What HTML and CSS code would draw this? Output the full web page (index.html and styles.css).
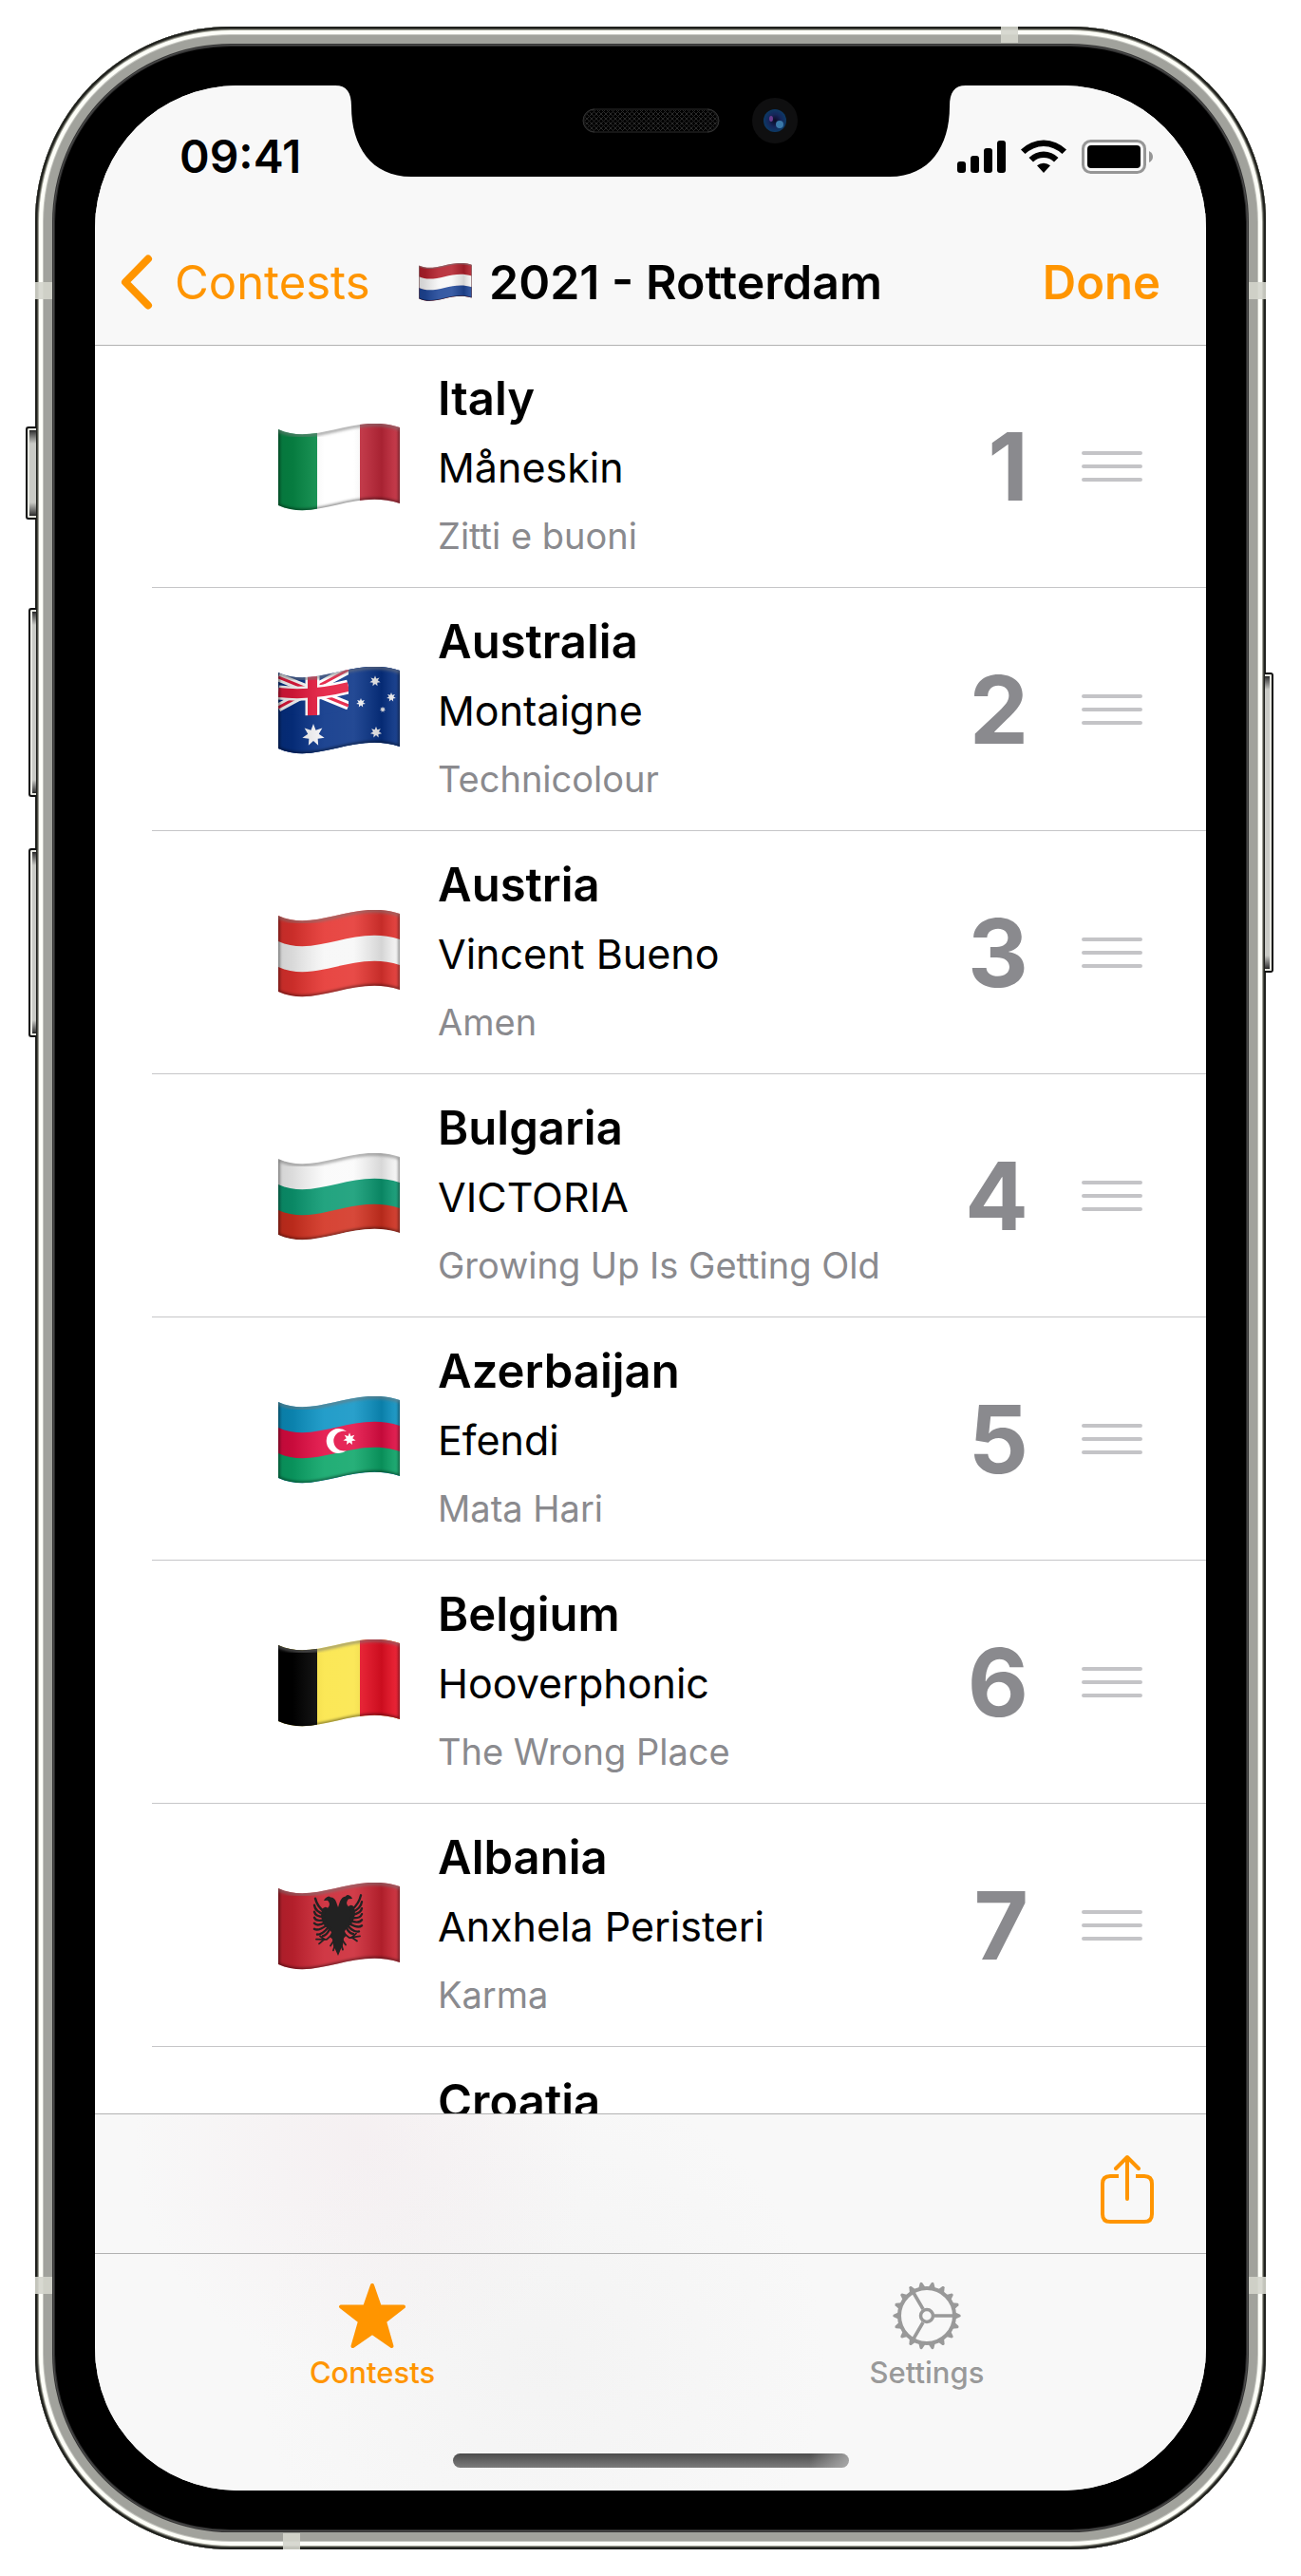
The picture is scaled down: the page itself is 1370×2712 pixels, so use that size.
FILE: index.html
```html
<!DOCTYPE html>
<html lang="en">
<head>
<meta charset="utf-8">
<meta name="viewport" content="width=device-width, initial-scale=1">
<title>2021 - Rotterdam</title>
<link rel="stylesheet" href="styles.css">
</head>
<body>
<svg class="defs" aria-hidden="true">
  <defs>
    <linearGradient id="shade">
      <stop offset="0" stop-color="#000" stop-opacity=".16"/>
      <stop offset=".12" stop-color="#000" stop-opacity=".12"/>
      <stop offset=".38" stop-color="#fff" stop-opacity=".1"/>
      <stop offset=".62" stop-color="#fff" stop-opacity=".12"/>
      <stop offset=".85" stop-color="#000" stop-opacity=".14"/>
      <stop offset="1" stop-color="#fff" stop-opacity=".1"/>
    </linearGradient>
    <filter id="soft"><feGaussianBlur stdDeviation="1.6"/></filter>
    <clipPath id="wave"><path d="M0 6C40 24 80-12 128 4V84C80 68 40 104 0 86Z"/></clipPath>
    <path id="band" d="M0 6C40 24 80-12 128 4V31C80 15 40 51 0 33Z"/>
    <g id="gloss">
      <path d="M0 6C40 24 80-12 128 4V84C80 68 40 104 0 86Z" fill="url(#shade)"/>
      <path d="M0 6V86C40 104 80 68 128 84V4" fill="none" stroke="#000" stroke-opacity=".5" stroke-width="3" filter="url(#soft)"/>
      <path d="M0 7C40 25 80-11 128 5" fill="none" stroke="#777" stroke-opacity=".6" stroke-width="4" filter="url(#soft)"/>
    </g>
    <polygon id="star7" points="0,-10 2.1,-4.4 7.8,-6.2 4.8,-1.1 9.7,2.2 3.9,3.1 4.3,9 0,5 -4.3,9 -3.9,3.1 -9.7,2.2 -4.8,-1.1 -7.8,-6.2 -2.1,-4.4"/>
    <g id="eagle-half">
      <path d="M0 26L2 20Q4 15 8 15Q10 12 14 16L15 18L11 18Q7 22 11 26Q14 23 17 27L18 34Q16 46 9 48L7 52L9 56L6 59L5 66L3 70L0 77Z"/>
      <g fill="none" stroke="#222" stroke-width="2.4" stroke-linecap="round">
        <path d="M14 30Q22 24 24 15M15 32Q24 29 25 22M15 35Q24 34 25 29M14 38Q23 40 25 35M13 41Q22 45 25 41M12 44Q21 50 25 47M10 46Q17 54 22 53M8 47Q12 55 16 55"/>
        <path stroke-width="1.8" d="M6 54L12 59L23 58M14 59L19 55M15 59L20 63M4 60L8 66M3 64L5 71"/>
      </g>
    </g>
    <symbol id="flag-it" viewBox="0 0 128 92"><g clip-path="url(#wave)">
      <rect width="128" height="92" fill="#fff"/><rect width="41" height="92" fill="#078c48"/><rect x="86" width="42" height="92" fill="#c3283a"/><use href="#gloss"/></g></symbol>
    <symbol id="flag-au" viewBox="0 0 128 92"><g clip-path="url(#wave)">
      <rect width="128" height="92" fill="#063186"/>
      <g transform="translate(0 1)">
        <path d="M0 10L74 40M74 2L0 42" stroke="#fff" stroke-width="9"/>
        <path d="M0 10L74 40M74 2L0 42" stroke="#e4183c" stroke-width="3"/>
        <path d="M36 0V52" stroke="#fff" stroke-width="15"/>
        <path d="M0 26Q34 30 74 20" fill="none" stroke="#fff" stroke-width="15"/>
        <path d="M36 0V52" stroke="#e4183c" stroke-width="10"/>
        <path d="M0 26Q34 30 74 20" fill="none" stroke="#e4183c" stroke-width="10"/>
      </g>
      <path d="M74 0H128V92H0V48Q34 56 74 45Z" fill="#063186"/>
      <g fill="#f4f4f6">
        <use href="#star7" transform="translate(37 72) scale(1.2)"/>
        <use href="#star7" transform="translate(102 15) scale(.58)"/>
        <use href="#star7" transform="translate(87 38) scale(.5)"/>
        <use href="#star7" transform="translate(119 32) scale(.5)"/>
        <use href="#star7" transform="translate(103 69) scale(.62)"/>
        <use href="#star7" transform="translate(110 45) scale(.32)"/>
      </g><use href="#gloss"/></g></symbol>
    <symbol id="flag-at" viewBox="0 0 128 92"><g clip-path="url(#wave)">
      <rect width="128" height="92" fill="#e5332f"/><use href="#band" y="27" fill="#f7f7f7"/><use href="#gloss"/></g></symbol>
    <symbol id="flag-bg" viewBox="0 0 128 92"><g clip-path="url(#wave)">
      <rect width="128" height="92" fill="#fafafa"/><use href="#band" y="53" fill="#d2301f"/><use href="#band" y="27" fill="#0b9a72"/><use href="#gloss"/></g></symbol>
    <symbol id="flag-az" viewBox="0 0 128 92"><g clip-path="url(#wave)">
      <rect width="128" height="92" fill="#0c93c4"/><use href="#band" y="53" fill="#0aa567"/><use href="#band" y="27" fill="#e30c43"/>
      <path d="M72 37A13 13 0 1 0 72 57A10.500 10.500 0 1 1 72 37Z" fill="#fff"/>
      <use href="#star7" transform="translate(75 45) scale(.68)" fill="#fff"/><use href="#gloss"/></g></symbol>
    <symbol id="flag-be" viewBox="0 0 128 92"><g clip-path="url(#wave)">
      <rect width="128" height="92" fill="#fbe544"/><rect width="41" height="92" fill="#000"/><rect x="86" width="42" height="92" fill="#ec0f23"/><use href="#gloss"/></g></symbol>
    <symbol id="flag-al" viewBox="0 0 128 92"><g clip-path="url(#wave)">
      <rect width="128" height="92" fill="#cb2331"/><use href="#gloss"/></g>
      <g transform="translate(63 0) skewY(-4)" fill="#222"><use href="#eagle-half"/><use href="#eagle-half" transform="scale(-1 1)"/></g></symbol>
    <symbol id="flag-nl" viewBox="0 0 128 92"><g clip-path="url(#wave)">
      <rect width="128" height="92" fill="#b3202c"/><use href="#band" y="53" fill="#1f4799"/><use href="#band" y="27" fill="#f7f7f7"/><use href="#gloss"/></g></symbol>
    <symbol id="grip" viewBox="0 0 64 34"><path d="M2 3H62M2 17H62M2 31H62" stroke="#c4c4c7" stroke-width="4" stroke-linecap="round"/></symbol>
    <pattern id="mesh" width="5" height="5" patternUnits="userSpaceOnUse"><path d="M0 0L5 5M5 0L0 5" stroke="#2a2a2a" stroke-width="1"/></pattern>
    <radialGradient id="lens">
      <stop offset="0" stop-color="#0a0a24"/><stop offset=".55" stop-color="#15265a"/><stop offset="1" stop-color="#0c3a66"/>
    </radialGradient>
  </defs>
</svg>

<main class="device">
  <span class="key key-mute"></span>
  <span class="key key-up"></span>
  <span class="key key-down"></span>
  <span class="key key-power"></span>
  <span class="band band-top"></span>
  <span class="band band-bottom"></span>
  <span class="band band-side band-left-high"></span>
  <span class="band band-side band-right-high"></span>
  <span class="band band-side band-left-low"></span>
  <span class="band band-side band-right-low"></span>

  <div class="screen">
    <svg class="notch" viewBox="0 0 664 96" aria-hidden="true">
      <path d="M0 0C12 0 17 7 17 22C17 64 38 96 80 96H584C626 96 647 64 647 22C647 7 652 0 664 0Z" fill="#000"/>
      <rect x="262" y="25" width="141" height="24" rx="12" fill="url(#mesh)" stroke="#161616" stroke-width="2"/>
      <path d="M273 25a12 12 0 0 0 0 24M392 25a12 12 0 0 1 0 24" fill="none" stroke="#333" stroke-width="1"/>
      <circle cx="463" cy="37" r="24" fill="#0f0f10"/>
      <circle cx="463" cy="37" r="12" fill="url(#lens)"/>
      <ellipse cx="459" cy="35" rx="2" ry="3" fill="#6a3a8c"/>
      <circle cx="468" cy="41" r="4" fill="#3a78a8"/>
    </svg>

    <header class="top">
      <div class="status">
        <time class="clock">09:41</time>
        <div class="indicators">
          <svg width="51" height="34" viewBox="0 0 51 34" role="img" aria-label="Signal"><rect y="22" width="9" height="12" rx="3"/><rect x="14" y="16" width="9" height="18" rx="3"/><rect x="28" y="8" width="9" height="26" rx="3"/><rect x="42" width="9" height="34" rx="3"/></svg>
          <svg width="48" height="35" viewBox="0 0 48 35" role="img" aria-label="Wi-Fi"><path d="M0 10.500A34 34 0 0 1 48 10.500L43.500 15A28 28 0 0 0 4.500 15ZM8.500 19A22 22 0 0 1 39.500 19L35 23.500A16 16 0 0 0 13 23.500ZM17 27.200A11 11 0 0 1 31 27.200L24 35Z"/></svg>
          <svg width="75" height="36" viewBox="0 0 75 36" role="img" aria-label="Battery"><rect x="1.500" y="1.500" width="65" height="33" rx="8" fill="none" stroke="#969696" stroke-width="3"/><rect x="6" y="6" width="56" height="24" rx="4"/><path d="M71 12Q75 14 75 18Q75 22 71 24Z" fill="#969696"/></svg>
        </div>
      </div>
      <nav class="navbar">
        <a class="back" href="#contests"><svg width="34" height="58" viewBox="0 0 34 58" aria-hidden="true"><path d="M29 4.500L5 29L29 53.500" fill="none" stroke="#ff9500" stroke-width="8" stroke-linecap="round" stroke-linejoin="round"/></svg>Contests</a>
        <h1 class="title"><svg width="56" height="40" role="img" aria-label="Netherlands"><use href="#flag-nl"/></svg>2021 - Rotterdam</h1>
        <button class="done" type="button">Done</button>
      </nav>
    </header>

    <ol class="entries">
      <li class="entry"><svg class="flag" aria-hidden="true"><use href="#flag-it"/></svg><div class="info"><h2>Italy</h2><p>Måneskin</p><p class="song">Zitti e buoni</p></div><span class="rank">1</span><button class="grip" type="button" aria-label="Reorder Italy"><svg><use href="#grip"/></svg></button></li>
      <li class="entry"><svg class="flag" aria-hidden="true"><use href="#flag-au"/></svg><div class="info"><h2>Australia</h2><p>Montaigne</p><p class="song">Technicolour</p></div><span class="rank">2</span><button class="grip" type="button" aria-label="Reorder Australia"><svg><use href="#grip"/></svg></button></li>
      <li class="entry"><svg class="flag" aria-hidden="true"><use href="#flag-at"/></svg><div class="info"><h2>Austria</h2><p>Vincent Bueno</p><p class="song">Amen</p></div><span class="rank">3</span><button class="grip" type="button" aria-label="Reorder Austria"><svg><use href="#grip"/></svg></button></li>
      <li class="entry"><svg class="flag" aria-hidden="true"><use href="#flag-bg"/></svg><div class="info"><h2>Bulgaria</h2><p>VICTORIA</p><p class="song">Growing Up Is Getting Old</p></div><span class="rank">4</span><button class="grip" type="button" aria-label="Reorder Bulgaria"><svg><use href="#grip"/></svg></button></li>
      <li class="entry"><svg class="flag" aria-hidden="true"><use href="#flag-az"/></svg><div class="info"><h2>Azerbaijan</h2><p>Efendi</p><p class="song">Mata Hari</p></div><span class="rank">5</span><button class="grip" type="button" aria-label="Reorder Azerbaijan"><svg><use href="#grip"/></svg></button></li>
      <li class="entry"><svg class="flag" aria-hidden="true"><use href="#flag-be"/></svg><div class="info"><h2>Belgium</h2><p>Hooverphonic</p><p class="song">The Wrong Place</p></div><span class="rank">6</span><button class="grip" type="button" aria-label="Reorder Belgium"><svg><use href="#grip"/></svg></button></li>
      <li class="entry"><svg class="flag" aria-hidden="true"><use href="#flag-al"/></svg><div class="info"><h2>Albania</h2><p>Anxhela Peristeri</p><p class="song">Karma</p></div><span class="rank">7</span><button class="grip" type="button" aria-label="Reorder Albania"><svg><use href="#grip"/></svg></button></li>
      <li class="entry"><span class="flag"></span><div class="info"><h2>Croatia</h2></div></li>
    </ol>

    <footer class="bottom">
      <div class="toolbar">
        <button class="share" type="button" aria-label="Share"><svg width="58" height="74" viewBox="0 0 58 74" fill="none" stroke="#ff9500" stroke-width="4" stroke-linecap="round" stroke-linejoin="round"><path d="M20 23H11Q3 23 3 31V63Q3 71 11 71H47Q55 71 55 63V31Q55 23 47 23H38" stroke-linecap="butt"/><path d="M29 47V4M17 15L29 3L41 15"/></svg></button>
      </div>
      <nav class="tabs">
        <a class="tab tab-active" href="#contests"><svg width="72" height="72" viewBox="0 0 72 72" aria-hidden="true"><path d="M36 4L43.800 26.500H69L49 41.800L56.500 68L36 53.800L15.500 68L23 41.800L3 26.500H28.200Z" fill="#ff9500" stroke="#ff9500" stroke-width="4" stroke-linejoin="round"/></svg>Contests</a>
        <a class="tab" href="#settings"><svg width="72" height="72" viewBox="-36 -36 72 72" fill="none" stroke="#999" stroke-width="4" aria-hidden="true">
          <circle r="29"/><circle r="6.500" stroke-width="3.500"/>
          <path d="M8 0H28M-4 -7L-14.500 -25M-4 7L-14.500 25" stroke-width="3.500"/>
          <defs><path id="tooth" d="M29 -4L35 -1.300Q36.500 0 35 1.300L29 4Z" fill="#999" stroke="none"/>
          <g id="teeth"><use href="#tooth"/><use href="#tooth" transform="rotate(20)"/><use href="#tooth" transform="rotate(40)"/><use href="#tooth" transform="rotate(60)"/><use href="#tooth" transform="rotate(80)"/><use href="#tooth" transform="rotate(100)"/></g></defs>
          <use href="#teeth"/><use href="#teeth" transform="rotate(120)"/><use href="#teeth" transform="rotate(240)"/>
        </svg>Settings</a>
      </nav>
      <div class="home-bar"></div>
    </footer>
  </div>
</main>
</body>
</html>
```
FILE: styles.css
```css
* { box-sizing: border-box; margin: 0; padding: 0; }
body {
  min-height: 100vh;
  padding: 28px 37px;
  display: flex;
  background: #fff;
  color: #000;
  font-family: Inter, "Liberation Sans", sans-serif;
}
svg { display: block; flex: none; }
button { border: 0; background: none; font: inherit; color: inherit; cursor: pointer; }
a { color: inherit; text-decoration: none; }
.defs { position: absolute; width: 0; height: 0; }

/* Phone body */
.device {
  position: relative;
  flex: 1;
  display: flex;
  height: calc(100vh - 56px);
  padding: 62px 63px;
  border-radius: 206px;
  background: #000;
  box-shadow:
    inset 0 0 0 2px #1f201c, inset 0 0 0 3px #4d4e48, inset 0 0 0 4px #a0a196,
    inset 0 0 0 8px #fdfef8, inset 0 0 0 9px #c4c5bf, inset 0 0 0 18px #a1a29c, inset 0 0 0 19px #333,
    inset 0 0 0 20px #4c4c4c, inset 0 0 0 21px #2a2a2a;
}
.band { position: absolute; background: #d4d5cc; opacity: .9; width: 18px; height: 17px; }
.band-top { top: 0; right: 261px; }
.band-bottom { bottom: 0; left: 261px; }
.band-side { width: 18px; height: 18px; }
.band-left-high { left: 0; top: 269px; }
.band-right-high { right: 0; top: 269px; }
.band-left-low { left: 0; bottom: 269px; }
.band-right-low { right: 0; bottom: 269px; }
.key {
  position: absolute;
  left: -7px;
  width: 8px;
  border: 2px solid #111;
  border-right: 0;
  border-radius: 3px 0 0 3px;
  background: linear-gradient(#000, #444 4px, #c9cac5 16px, #c9cac5 calc(100% - 16px), #444 calc(100% - 4px), #000);
  box-shadow: inset 2px 0 0 #e8e9e2, inset 0 2px 0 #e4e5de, inset 0 -2px 0 #e4e5de;
}
.key-mute { left: -10px; width: 11px; top: 421px; height: 98px; }
.key-up { top: 612px; height: 199px; }
.key-down { top: 865px; height: 199px; }
.key-power { left: auto; right: -8px; width: 9px; top: 680px; height: 316px; border: 2px solid #111; border-left: 0; border-radius: 0 3px 3px 0; box-shadow: inset -2px 0 0 #e8e9e2, inset 0 2px 0 #e4e5de, inset 0 -2px 0 #e4e5de; }

.screen {
  position: relative;
  flex: 1;
  display: flex;
  flex-direction: column;
  overflow: hidden;
  border-radius: 150px;
  background: #fff;
}
.notch { position: absolute; top: 0; left: 50%; width: 664px; height: 96px; margin-left: -332px; z-index: 2; }

/* Status and navigation bars */
.top { position: relative; z-index: 1; background: #f8f8f8; box-shadow: 0 1px 0 #b2b2b2; }
.status {
  display: flex;
  align-items: center;
  justify-content: space-between;
  height: 141px;
  padding: 8px 56px 0 89px;
}
.clock { font-size: 48px; font-weight: 600; }
.indicators { display: flex; align-items: center; gap: 16px; }
.navbar {
  display: grid;
  grid-template-columns: 1fr auto 1fr;
  align-items: center;
  height: 132px;
  padding: 0 27px;
  font-size: 49px;
}
.back { display: flex; align-items: center; gap: 23px; color: #ff9500; }
.title { display: flex; align-items: center; gap: 18px; font-size: 50px; font-weight: 600; white-space: nowrap; }
.done { justify-self: end; margin-right: 21px; color: #ff9500; font-weight: 600; }

/* Ranked entries */
.entries { flex: 1; min-height: 0; overflow: hidden; list-style: none; }
.entry {
  display: flex;
  align-items: center;
  height: 256px;
  margin-left: 60px;
  padding: 0 67px 0 133px;
  border-bottom: 1px solid #c6c6c8;
}
.entry:last-child { align-items: flex-start; padding-top: 20px; }
.flag { flex: none; width: 128px; height: 92px; margin-top: 2px; }
.info { flex: 1; min-width: 0; margin: 2px 0 0 40px; line-height: 72px; white-space: nowrap; }
.info h2 { font-size: 49px; font-weight: 600; }
.info p { font-size: 43px; }
.info .song { color: #8a8a8e; font-size: 38px; }
.rank { color: #8a8a8e; font-size: 99px; font-weight: 700; line-height: 120px; }
.grip { flex: none; margin-left: 56px; }
.grip svg { width: 64px; height: 34px; }

/* Bottom bars */
.bottom {
  position: relative;
  background:
    radial-gradient(circle 240px at 280px 30px, rgba(235, 215, 222, .25), transparent),
    radial-gradient(circle 300px at 470px 260px, rgba(225, 225, 225, .2), transparent),
    #f8f8f8;
  box-shadow: 0 -1px 0 #b2b2b2;
}
.toolbar {
  display: flex;
  align-items: center;
  justify-content: flex-end;
  height: 147px;
  padding: 12px 54px 0 0;
  border-bottom: 1px solid #b2b2b2;
}
.tabs { display: grid; grid-template-columns: 1fr 1fr; height: 249px; padding: 29px 2px 0 0; }
.tab { display: flex; flex-direction: column; align-items: center; gap: 4px; color: #999; font-size: 31px; font-weight: 500; line-height: 40px; }
.tab-active { color: #ff9500; }
.home-bar {
  position: absolute;
  bottom: 24px;
  left: 50%;
  width: 417px;
  height: 15px;
  margin-left: -208px;
  border-radius: 8px;
  background:
    linear-gradient(90deg, transparent 90%, rgba(190, 190, 190, .7)),
    linear-gradient(#4c4c4c, #7c7c7c);
}
```
